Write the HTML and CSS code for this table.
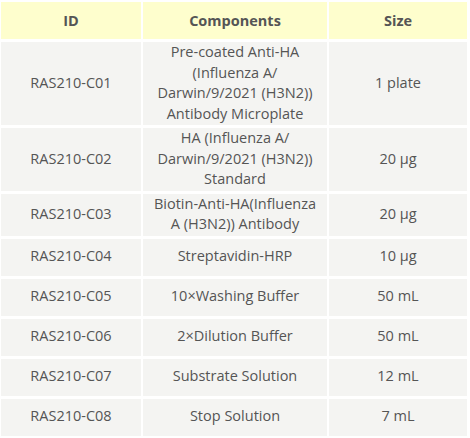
FILE: index.html
```html
<!DOCTYPE html>
<html>
<head>
<meta charset="utf-8">
<link rel="stylesheet" href="styles.css">
</head>
<body>
<table class="kit">
  <colgroup>
    <col class="c-id">
    <col class="c-comp">
    <col class="c-size">
  </colgroup>
  <thead>
    <tr><th>ID</th><th>Components</th><th>Size</th></tr>
  </thead>
  <tbody>
    <tr><td>RAS210-C01</td><td>Pre-coated Anti-HA<br>(Influenza A/<br>Darwin/9/2021 (H3N2))<br>Antibody Microplate</td><td>1 plate</td></tr>
    <tr><td>RAS210-C02</td><td>HA (Influenza A/<br>Darwin/9/2021 (H3N2))<br>Standard</td><td>20 μg</td></tr>
    <tr><td>RAS210-C03</td><td>Biotin-Anti-HA(Influenza<br>A (H3N2)) Antibody</td><td>20 μg</td></tr>
    <tr><td>RAS210-C04</td><td>Streptavidin-HRP</td><td>10 μg</td></tr>
    <tr><td>RAS210-C05</td><td>10×Washing Buffer</td><td>50 mL</td></tr>
    <tr><td>RAS210-C06</td><td>2×Dilution Buffer</td><td>50 mL</td></tr>
    <tr><td>RAS210-C07</td><td>Substrate Solution</td><td>12 mL</td></tr>
    <tr><td>RAS210-C08</td><td>Stop Solution</td><td>7 mL</td></tr>
  </tbody>
</table>
</body>
</html>
```
FILE: styles.css
```css
html, body {
  margin: 0;
  padding: 0;
  background: #ffffff;
}
body {
  font-family: "Open Sans", "Noto Sans", sans-serif;
  color: #555555;
}
.kit {
  border-collapse: separate;
  border-spacing: 2px 3px;
  width: 468px;
  margin: -1px 0 0 -1px;
  table-layout: fixed;
}
.c-id { width: 140px; }
.c-comp { width: 184px; }
.c-size { width: 138px; }
.kit th {
  background: #fefecd;
  font-weight: 700;
  font-size: 14.5px;
  height: 37px;
  padding: 0;
  text-align: center;
  color: #555555;
}
.kit td {
  background: #f4f4f2;
  font-size: 14.5px;
  line-height: 20.5px;
  height: 37px;
  padding: 0 0 1px;
  text-align: center;
  vertical-align: middle;
  box-sizing: border-box;
}
```
